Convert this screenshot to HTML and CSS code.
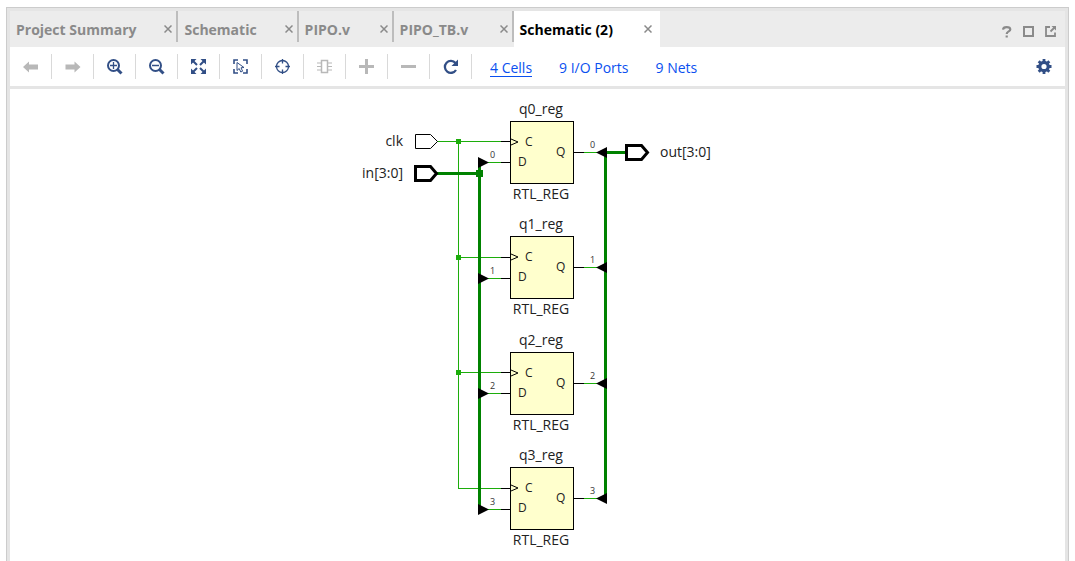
FILE: index.html
```html
<!DOCTYPE html>
<html lang="en">
<head>
<meta charset="utf-8">
<title>Schematic (2)</title>
<link rel="stylesheet" href="styles.css">
</head>
<body>
<main class="panel">
  <header class="tabbar">
    <nav class="tabs" aria-label="Open views">
      <div class="tab"><button class="tab-name">Project Summary</button><button class="close" aria-label="Close Project Summary"><svg width="8" height="8" viewBox="0 0 8 8"><path d="M.5.5l7 7M7.5.5l-7 7"/></svg></button></div>
      <div class="tab"><button class="tab-name">Schematic</button><button class="close" aria-label="Close Schematic"><svg width="8" height="8" viewBox="0 0 8 8"><path d="M.5.5l7 7M7.5.5l-7 7"/></svg></button></div>
      <div class="tab short"><button class="tab-name">PIPO.v</button><button class="close" aria-label="Close PIPO.v"><svg width="8" height="8" viewBox="0 0 8 8"><path d="M.5.5l7 7M7.5.5l-7 7"/></svg></button></div>
      <div class="tab"><button class="tab-name">PIPO_TB.v</button><button class="close" aria-label="Close PIPO_TB.v"><svg width="8" height="8" viewBox="0 0 8 8"><path d="M.5.5l7 7M7.5.5l-7 7"/></svg></button></div>
      <div class="tab active"><button class="tab-name">Schematic (2)</button><button class="close" aria-label="Close Schematic (2)"><svg width="8" height="8" viewBox="0 0 8 8"><path d="M.5.5l7 7M7.5.5l-7 7"/></svg></button></div>
    </nav>
    <div class="window-tools">
      <button aria-label="Help"><svg width="12" height="12" viewBox="0 0 12 12"><path d="M2 3.700C2.200 1.900 3.600 1.200 5.500 1.200s3.800.7 3.800 2.300C9.300 5.500 5.700 5.400 5.700 8M5.700 9.500v2" stroke-width="2.200"/></svg></button>
      <button aria-label="Maximize"><svg width="12" height="12" viewBox="0 0 12 12"><path d="M1 1h9v9H1z" stroke-width="2"/></svg></button>
      <button aria-label="Float"><svg width="12" height="12" viewBox="0 0 12 12"><path d="M5 1H1v9h9V6.500M5.500 5.500l4-4" stroke-width="1.800"/><path d="M6.500 0H11v4.500z" class="solid"/></svg></button>
    </div>
  </header>
  <div class="toolbar">
    <button class="tool off" aria-label="Back"><svg width="16" height="16" viewBox="0 0 16 16"><path class="solid" d="M0 8l6-5.500V5.500h9v5H6v3z"/></svg></button>
    <button class="tool off" aria-label="Forward"><svg width="16" height="16" viewBox="0 0 16 16"><path class="solid" d="M15.500 8l-6-5.500v3h-9v5h9v3z"/></svg></button>
    <button class="tool" aria-label="Zoom in"><svg width="16" height="16" viewBox="0 0 16 16"><circle cx="6.500" cy="6.500" r="5.500" stroke-width="2"/><path d="M3 6.500h7M6.500 3v7" stroke-width="1.300"/><path d="M10.500 10.500l4 4" stroke-width="3"/></svg></button>
    <button class="tool" aria-label="Zoom out"><svg width="16" height="16" viewBox="0 0 16 16"><circle cx="6.500" cy="6.500" r="5.500" stroke-width="2"/><path d="M3 6.500h7" stroke-width="1.500"/><path d="M10.500 10.500l4 4" stroke-width="3"/></svg></button>
    <button class="tool" aria-label="Zoom fit"><svg width="16" height="16" viewBox="0 0 16 16"><path class="solid" d="M0 0h5.500L0 5.500zM15 0H9.500L15 5.500zM0 15h5.500L0 9.500zM15 15H9.500L15 9.500z"/><path d="M2 2l4 4M13 2L9 6M2 13l4-4M13 13L9 9" stroke-width="2"/></svg></button>
    <button class="tool" aria-label="Select area"><svg width="16" height="16" viewBox="0 0 16 16"><path d="M1 5V1h4M10 1h4v4M14 10v4h-4M5 14H1v-4" stroke-width="1.600"/><path d="M4 3.500v8l2.200-2 1.600 3.500 1.800-.8L8 8.800l3-.3z" stroke-width="1"/></svg></button>
    <button class="tool" aria-label="Autofit selection"><svg width="16" height="16" viewBox="0 0 16 16"><circle cx="7.500" cy="7.500" r="6" stroke-width="1.300"/><path d="M7.500 0v4.500M7.500 10.500V15M0 7.500h4.500M10.500 7.500H15" stroke-width="1.300"/></svg></button>
    <button class="tool off" aria-label="Expand cell"><svg width="16" height="16" viewBox="0 0 16 16"><path d="M4.500 1.500h6v12h-6z" stroke-width="1.500"/><path d="M0 4h4M0 7.500h4M0 11h4M11 4h4M11 7.500h4M11 11h4" stroke-width="1.200"/></svg></button>
    <button class="tool off" aria-label="Add"><svg width="16" height="16" viewBox="0 0 16 16"><path d="M0 7.500h15M7.500 0v15" stroke-width="3"/></svg></button>
    <button class="tool off" aria-label="Remove"><svg width="16" height="16" viewBox="0 0 16 16"><path d="M0 7.500h15" stroke-width="3"/></svg></button>
    <button class="tool" aria-label="Refresh"><svg width="16" height="16" viewBox="0 0 16 16"><path d="M12.500 4A6 6 0 1 0 13 11" stroke-width="2.300"/><path class="solid" d="M15 .5V7H8.500z"/></svg></button>
    <div class="counts">
      <a class="current" href="#cells">4 Cells</a>
      <a href="#ports">9 I/O Ports</a>
      <a href="#nets">9 Nets</a>
    </div>
    <button class="settings" aria-label="Settings"><svg width="16" height="16" viewBox="0 0 16 16"><circle cx="8" cy="7.500" r="4.200" stroke-width="3.200"/><path d="M8 0v3M8 12v3M.5 7.500h3M12.500 7.500h3M2.700 2.200l2 2M11.300 10.800l2 2M2.700 12.800l2-2M11.300 4.200l2-2" stroke-width="2.800"/></svg></button>
  </div>
  <section class="canvas">
    <svg class="schematic" width="355" height="472" viewBox="360 89 355 472" role="img" aria-label="Four-bit parallel register schematic">
      <g class="net">
        <path d="M437 141.500H502M458.500 141V488.500H502M458 257.500H502M458 372.500H502"/>
        <path d="M487 162.500H502M487 278.500H502M487 393.500H502M487 509.500H502"/>
        <path d="M583 152.500H598M583 267.500H598M583 383.500H598M583 498.500H598"/>
      </g>
      <g class="node"><path d="M456 139h5v5h-5zM456 255h5v5h-5zM456 370h5v5h-5z"/></g>
      <g class="bus">
        <path d="M437 173.500H479.500M479.500 162V510M605.500 152V499M605 152.500H626"/>
        <path class="bus-node" d="M476 170h7v7h-7z"/>
      </g>
      <g class="tap">
        <path d="M478 157l11 5.500-11 5.500zM478 273l11 5.500-11 5.500zM478 388l11 5.500-11 5.500zM478 504l11 5.500-11 5.500z"/>
        <path d="M607 147l-11 5.500 11 5.500zM607 262l-11 5.500 11 5.500zM607 378l-11 5.500 11 5.500zM607 493l-11 5.500 11 5.500z"/>
      </g>
      <path class="port" d="M415.500 134.500h15l7 7-7 7h-15z"/>
      <path class="port wide" d="M415.500 166.500h15l6 7-6 7h-15z"/>
      <path class="port wide" d="M626.500 145.500h15l6 7-6 7h-15z"/>
      <g class="label">
        <text x="403" y="146" text-anchor="end">clk</text>
        <text x="403" y="178" text-anchor="end">in[3:0]</text>
        <text x="660" y="157">out[3:0]</text>
      </g>
      <g class="cell">
        <path class="pin" d="M501 141.500h9M501 162.500h9M574 152.500h10"/>
        <rect x="510.500" y="121.500" width="63" height="62"/>
        <path class="clock" d="M511 139l7 3-7 3"/>
        <text class="label" x="541" y="114" text-anchor="middle">q0_reg</text>
        <text class="label" x="541" y="199" text-anchor="middle">RTL_REG</text>
        <text class="pin-name" x="525" y="146">C</text><text class="pin-name" x="518" y="166">D</text><text class="pin-name" x="556" y="156">Q</text>
        <text class="bit" x="490" y="158">0</text><text class="bit" x="590" y="148">0</text>
      </g>
      <g class="cell">
        <path class="pin" d="M501 257.500h9M501 278.500h9M574 267.500h10"/>
        <rect x="510.500" y="236.500" width="63" height="62"/>
        <path class="clock" d="M511 254l7 3-7 3"/>
        <text class="label" x="541" y="229" text-anchor="middle">q1_reg</text>
        <text class="label" x="541" y="314" text-anchor="middle">RTL_REG</text>
        <text class="pin-name" x="525" y="261">C</text><text class="pin-name" x="518" y="281">D</text><text class="pin-name" x="556" y="271">Q</text>
        <text class="bit" x="490" y="274">1</text><text class="bit" x="590" y="263">1</text>
      </g>
      <g class="cell">
        <path class="pin" d="M501 372.500h9M501 393.500h9M574 383.500h10"/>
        <rect x="510.500" y="352.500" width="63" height="62"/>
        <path class="clock" d="M511 370l7 3-7 3"/>
        <text class="label" x="541" y="345" text-anchor="middle">q2_reg</text>
        <text class="label" x="541" y="430" text-anchor="middle">RTL_REG</text>
        <text class="pin-name" x="525" y="377">C</text><text class="pin-name" x="518" y="397">D</text><text class="pin-name" x="556" y="387">Q</text>
        <text class="bit" x="490" y="389">2</text><text class="bit" x="590" y="379">2</text>
      </g>
      <g class="cell">
        <path class="pin" d="M501 488.500h9M501 509.500h9M574 498.500h10"/>
        <rect x="510.500" y="467.500" width="63" height="62"/>
        <path class="clock" d="M511 485l7 3-7 3"/>
        <text class="label" x="541" y="460" text-anchor="middle">q3_reg</text>
        <text class="label" x="541" y="545" text-anchor="middle">RTL_REG</text>
        <text class="pin-name" x="525" y="492">C</text><text class="pin-name" x="518" y="512">D</text><text class="pin-name" x="556" y="502">Q</text>
        <text class="bit" x="490" y="505">3</text><text class="bit" x="590" y="494">3</text>
      </g>
    </svg>
  </section>
</main>
</body>
</html>
```
FILE: styles.css
```css
* { box-sizing: border-box; }
body {
  margin: 0;
  padding: 7px 6px 0;
  background: #fff;
  font-family: "Open Sans", "Noto Sans", sans-serif;
  font-size: 14px;
}
button {
  margin: 0;
  padding: 0;
  border: 0;
  background: none;
  font: inherit;
  color: inherit;
  cursor: pointer;
}
svg { display: block; fill: none; stroke: currentColor; }
.solid { fill: currentColor; stroke: none; }
.panel {
  display: flex;
  flex-direction: column;
  min-height: calc(100vh - 7px);
  border: 1px solid #ccc;
  border-bottom: 0;
  padding: 3px 3px 0;
  background: #e5e5e5;
}
.tabbar {
  display: flex;
  justify-content: space-between;
  height: 36px;
  background: #ececec;
}
.tabs { display: flex; }
.tab {
  display: flex;
  align-items: center;
  justify-content: space-between;
  gap: 28px;
  min-width: 120px;
  padding: 0 6px;
  color: #8a8a8a;
  font-weight: 700;
  background: linear-gradient(#bdbdbd, #bdbdbd) right top / 2px 31px no-repeat;
}
.tab.short { min-width: 95px; }
.tab.active { min-width: 146px; padding-right: 8px; background: #fff; color: #000; }
.close { color: #8a8a8a; }
.close svg { stroke-width: 1.5; }
.window-tools {
  display: flex;
  align-items: center;
  gap: 10px;
  padding: 5px 8px 0 0;
  color: #8a8a8a;
}
.toolbar {
  display: flex;
  align-items: center;
  height: 39px;
  background: #fff;
  color: #324f86;
}
.tool {
  display: grid;
  place-items: center;
  width: 42px;
  height: 25px;
  border-right: 1px solid #d9d9d9;
}
.off { color: #b8b8b8; }
.counts { display: flex; gap: 27px; padding: 3px 0 0 18px; }
.counts a {
  color: #0a50f0;
  line-height: 16px;
  text-decoration: none;
  border-bottom: 1px solid transparent;
}
.counts .current { border-color: currentColor; }
.settings { margin-left: auto; padding-right: 13px; }
.canvas {
  display: flex;
  flex: 1;
  justify-content: center;
  margin-top: 3px;
  background: #fff;
}
.schematic { stroke: none; flex: none; }
.net { stroke: #1cad0b; shape-rendering: crispEdges; }
.node { fill: #1cad0b; }
.bus { stroke: #008200; stroke-width: 3; shape-rendering: crispEdges; }
.bus-node { fill: #008200; stroke: none; }
.tap { fill: #000; }
.port { fill: #fff; stroke: #000; }
.wide { stroke-width: 3; }
.cell rect { fill: #ffffcd; stroke: #000; shape-rendering: crispEdges; }
.pin { stroke: #000; shape-rendering: crispEdges; }
.clock { stroke: #000; }
.label { fill: #222; font-size: 14px; }
.pin-name { fill: #222; font-size: 12px; }
.bit { fill: #333; font-size: 9px; }
```
